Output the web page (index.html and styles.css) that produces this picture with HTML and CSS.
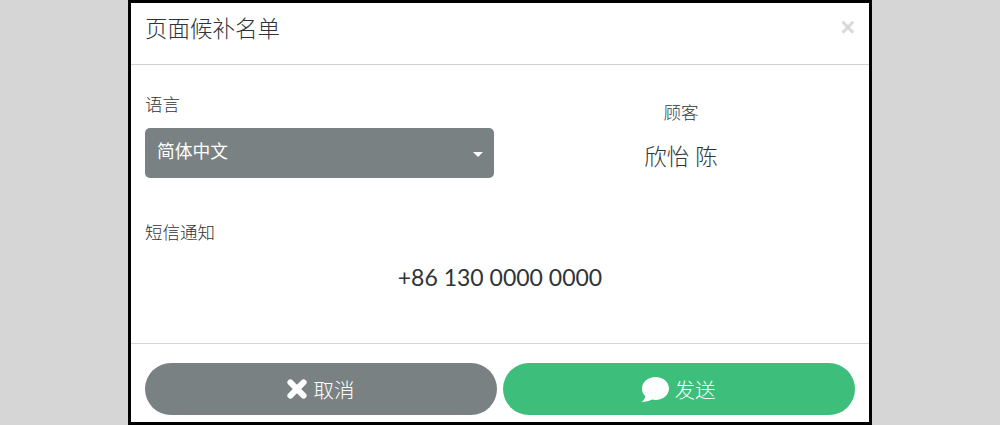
FILE: index.html
```html
<!DOCTYPE html>
<html lang="zh-CN">
<head>
<meta charset="utf-8">
<title>页面候补名单</title>
<link rel="stylesheet" href="styles.css">
</head>
<body>
<div class="modal">
  <header class="modal-header">
    <h1 class="modal-title">页面候补名单</h1>
    <span class="close">×</span>
  </header>
  <main class="modal-body">
    <div class="top-row">
      <div class="lang-col">
        <div class="label">语言</div>
        <div class="select"><span>简体中文</span><i class="caret"></i></div>
      </div>
      <div class="customer-col">
        <div class="label">顾客</div>
        <div class="customer-name">欣怡 陈</div>
      </div>
    </div>
    <div class="label sms-label">短信通知</div>
    <div class="phone">+86 130 0000 0000</div>
  </main>
  <footer class="modal-footer">
    <button class="btn btn-cancel">
      <svg class="icon-x" viewBox="0 0 20 20" width="22" height="22"><path d="M4 4 L16 16 M16 4 L4 16" stroke="#fff" stroke-width="5.4" stroke-linecap="round" fill="none"/></svg>
      <span>取消</span>
    </button>
    <button class="btn btn-send">
      <svg class="icon-chat" viewBox="0 0 28 25" width="28" height="25"><path d="M14.5 0C22 0 28 5.1 28 11.5C28 17.9 22 23 14.5 23C13.2 23 12 22.8 10.8 22.5C8.4 24 5 24.9 0.6 24.9C2.4 23.6 3.6 22 4.3 19.2C2 17.2 1 14.5 1 11.5C1 5.1 7 0 14.5 0Z" fill="#fff"/></svg>
      <span>发送</span>
    </button>
  </footer>
</div>
</body>
</html>
```
FILE: styles.css
```css
* { box-sizing: border-box; }
html, body { margin: 0; padding: 0; height: 100%; }
body {
  background: #d6d6d6;
  font-family: Lato, "Noto Sans CJK SC", sans-serif;
  font-weight: 300;
  color: #2f3436;
  overflow: hidden;
}
.modal {
  width: 744px;
  height: 425px;
  margin: 0 auto;
  background: #fff;
  border: 3px solid #000;
  display: flex;
  flex-direction: column;
}
.modal-header {
  height: 62px;
  flex: none;
  border-bottom: 1px solid #d0d0d4;
  padding: 0 14px;
  display: flex;
  justify-content: space-between;
  align-items: flex-start;
}
.modal-title {
  margin: 9px 0 0;
  font-size: 22.5px;
  line-height: 34px;
  font-weight: 300;
}
.close {
  font-family: "Liberation Sans", sans-serif;
  font-size: 25px;
  font-weight: 700;
  line-height: 26px;
  margin-top: 11px;
  color: #d9d9d9;
}
.modal-body {
  flex: 1;
  padding: 0 14px;
}
.top-row {
  display: flex;
  gap: 12px;
  height: 111px;
  margin-top: 28px;
}
.lang-col { width: 349px; }
.label {
  font-size: 17.5px;
  line-height: 24px;
}
.select {
  margin-top: 11px;
  height: 50px;
  border-radius: 5px;
  background: #7a8182;
  color: #fff;
  font-size: 17.75px;
  font-weight: 400;
  padding: 0 11px 6px 12px;
  display: flex;
  align-items: center;
  justify-content: space-between;
}
.caret {
  width: 0;
  height: 0;
  margin-top: 8px;
  border-left: 5.5px solid transparent;
  border-right: 5.5px solid transparent;
  border-top: 5px solid #fff;
}
.customer-col {
  flex: 1;
  text-align: center;
  padding-top: 8px;
  padding-left: 1px;
}
.customer-name {
  font-size: 22.5px;
  line-height: 30px;
  margin-top: 17px;
}
.sms-label {
  margin-top: 17px;
}
.phone {
  margin-top: 17px;
  text-align: center;
  font-size: 23px;
  font-weight: 400;
  line-height: 30px;
}
.modal-footer {
  height: 79px;
  flex: none;
  border-top: 1px solid #d6d6d6;
  padding: 19px 14px 0;
  display: flex;
  gap: 6px;
}
.btn {
  flex: 1;
  height: 52px;
  border: 0;
  padding: 0;
  border-radius: 26px;
  color: #fff;
  font-family: inherit;
  font-weight: 300;
  font-size: 20.5px;
  display: flex;
  align-items: center;
  justify-content: center;
  gap: 6px;
}
.btn-cancel { background: #7a8182; gap: 7px; }
.btn-cancel span { margin-right: 2px; }
.btn-send { background: #3dbe7b; }
.icon-x { margin-right: -1px; }
.icon-chat { margin-left: -2px; }
```
